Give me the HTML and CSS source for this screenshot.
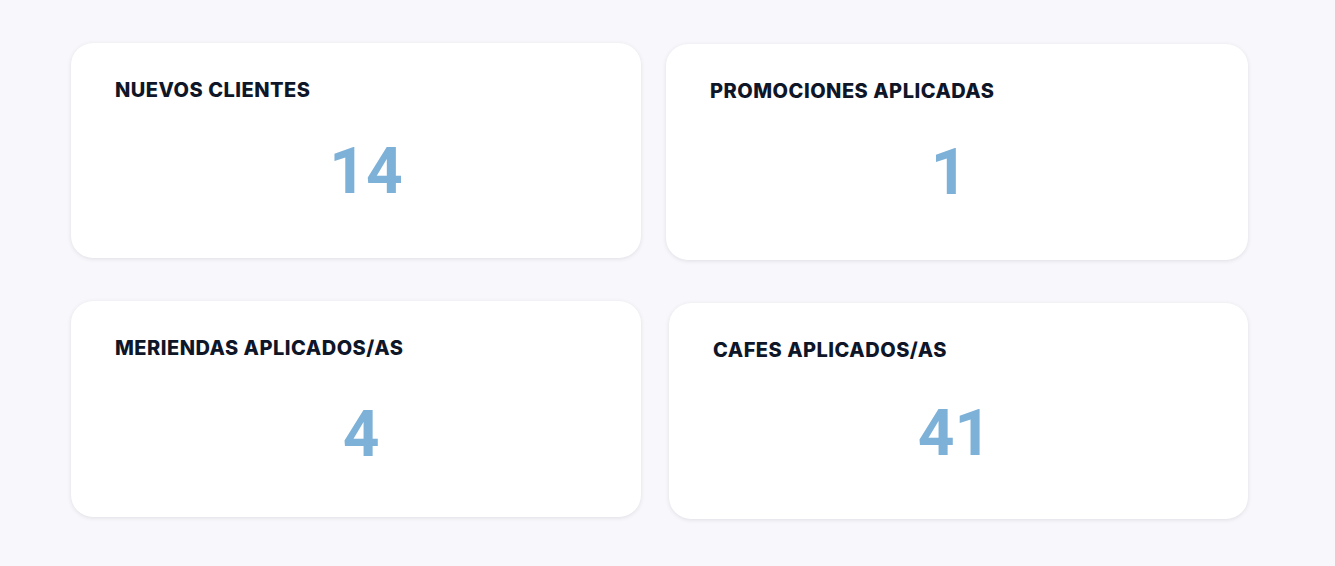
FILE: index.html
```html
<!DOCTYPE html>
<html lang="es">
<head>
<meta charset="utf-8">
<title>Resumen</title>
<link rel="stylesheet" href="styles.css">
</head>
<body>
<main class="stats">
  <section class="card card-a">
    <h2 class="card-title">NUEVOS CLIENTES</h2>
    <p class="card-value">14</p>
  </section>
  <section class="card card-b">
    <h2 class="card-title">PROMOCIONES APLICADAS</h2>
    <p class="card-value">1</p>
  </section>
  <section class="card card-c">
    <h2 class="card-title">MERIENDAS APLICADOS/AS</h2>
    <p class="card-value">4</p>
  </section>
  <section class="card card-d">
    <h2 class="card-title">CAFES APLICADOS/AS</h2>
    <p class="card-value">41</p>
  </section>
</main>
</body>
</html>
```
FILE: styles.css
```css
html, body {
  margin: 0;
  padding: 0;
  background: #f8f8fc;
  height: 100%;
}
body {
  font-family: "Open Sans", "Liberation Sans", sans-serif;
}
.stats {
  display: grid;
  grid-template-columns: 570px 582px;
  grid-auto-rows: 215px;
  column-gap: 25px;
  row-gap: 43px;
  padding: 43px 0 0 71px;
}
.card {
  background: #ffffff;
  border-radius: 22px;
  box-shadow: 0 1px 4px rgba(30, 30, 60, 0.12);
  padding: 35px 24px 0 44px;
  display: flex;
  flex-direction: column;
  box-sizing: border-box;
}
.card-b { margin-top: 1px; height: 216px; padding-right: 60px; }
.card-c { height: 216px; padding-right: 34px; }
.card-d { margin-top: 2px; margin-left: 3px; height: 216px; padding-right: 52px; }
.card-title {
  margin: 0;
  font-family: "Inter", "Open Sans", sans-serif;
  font-weight: 800;
  font-size: 20px;
  letter-spacing: 0.5px;
  color: #0e1628;
}
.card-value {
  margin: 38px 0 0;
  text-align: center;
  font-family: "Roboto", "Inter", sans-serif;
  font-weight: 700;
  font-size: 64px;
  line-height: 1;
  color: #7eb1d8;
}
.card-c .card-value { margin-top: 43px; }
.card-d .card-value { margin-top: 40px; }
```
